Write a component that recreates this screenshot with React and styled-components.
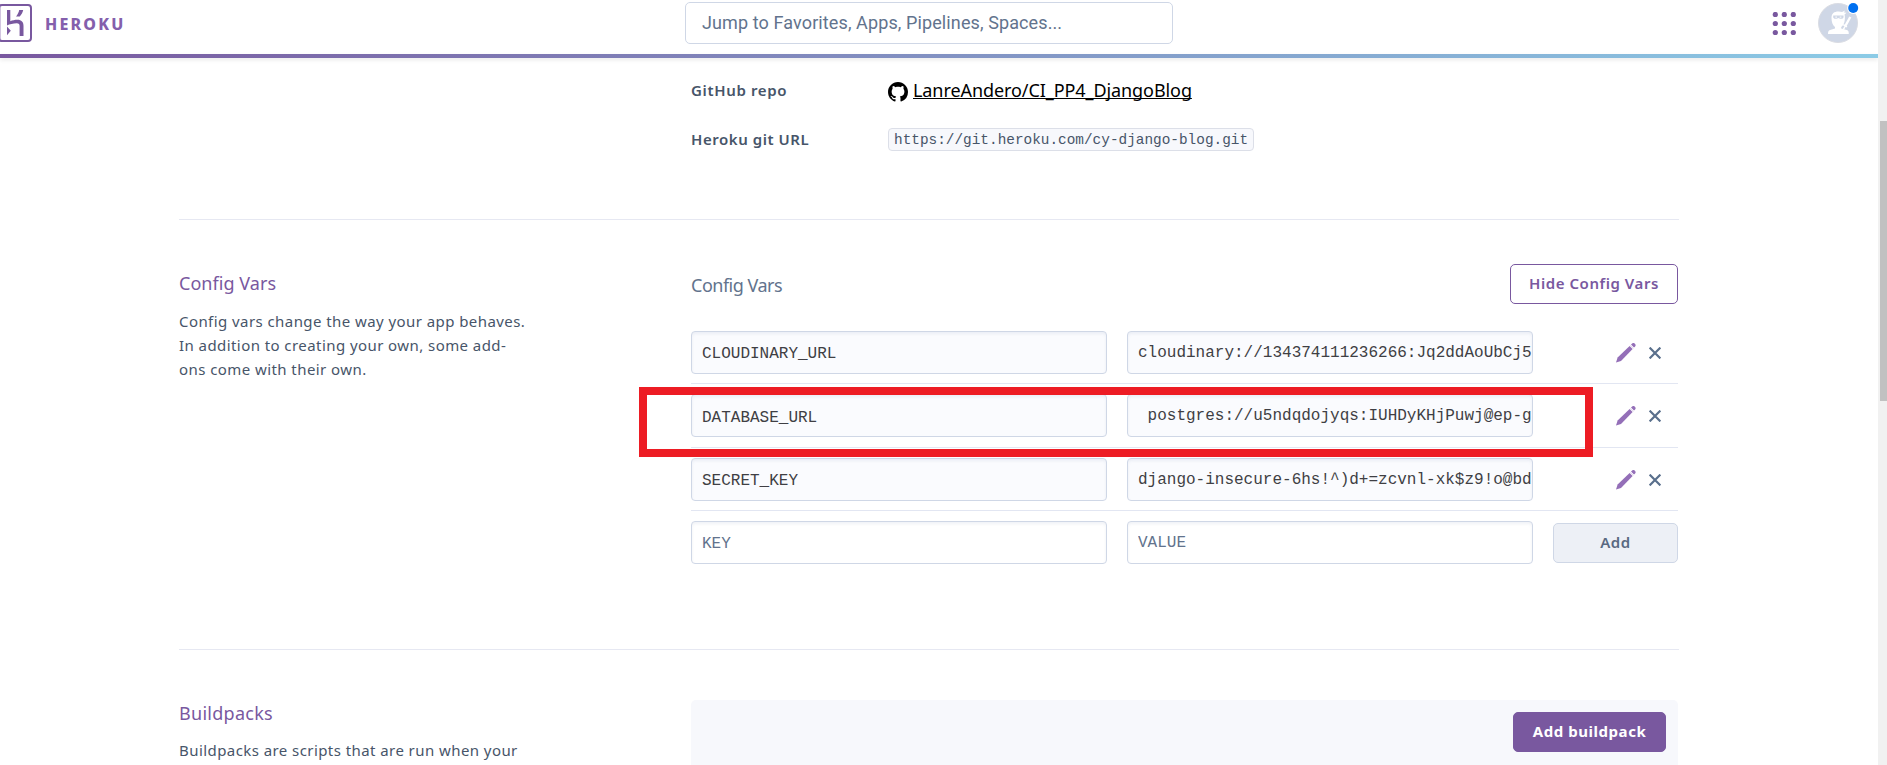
import React from 'react';
import styled, { createGlobalStyle } from 'styled-components';

const Global = createGlobalStyle`
  *, *::before, *::after { box-sizing: border-box; }
  body { margin: 0; background: #fff; overflow: hidden; color: #475569; font-family: "Noto Sans", "Open Sans", sans-serif; }
  h2, h3, p { margin: 0; font-weight: 400; }
  button, input { font-family: inherit; }
`;

const Page = styled.div`
  display: flex;
  height: 765px;
  width: 1887px;
  overflow: hidden;
`;
const Viewport = styled.div`
  width: 1878px;
  flex: none;
  overflow: hidden;
`;
const Scrollbar = styled.div`
  flex: 1;
  background: #f1f1f1;
  padding: 121px 0 0 2px;
`;
const Thumb = styled.div`
  height: 280px;
  background: #c1c1c1;
`;
const Header = styled.header`
  height: 54px;
  display: flex;
  justify-content: space-between;
`;
const GradientBar = styled.div`
  height: 4px;
  background: linear-gradient(90deg, #79589f, #8bcbe6);
  box-shadow: 0 2px 4px rgba(0, 0, 0, 0.09);
`;
const Brand = styled.div`
  display: flex;
  width: 685px;
  padding-top: 4px;
`;
const BrandName = styled.span`
  margin: 8px 0 0 13px;
  font-size: 16px;
  line-height: 24px;
  font-weight: 800;
  letter-spacing: 2.2px;
  color: #845fac;
`;
const Search = styled.input`
  width: 488px;
  height: 42px;
  margin-top: 2px;
  padding: 0 16px 2px;
  border: 1px solid #cfd7e6;
  border-radius: 5px;
  font-family: Roboto, sans-serif;
  font-size: 18px;
  letter-spacing: 0.11px;
  &::placeholder { color: #62738d; opacity: 1; }
`;
const Account = styled.div`
  display: flex;
  justify-content: flex-end;
  gap: 22px;
  width: 705px;
  padding: 3px 19px 0 0;
`;
const Dots = styled.svg`
  margin-top: 9px;
`;
const Content = styled.main`
  width: 1500px;
  margin-left: 179px;
`;
const InfoSection = styled.section`
  height: 162px;
  padding: 19px 0 0 512px;
  border-bottom: 1px solid #e6e8f2;
`;
const InfoRow = styled.div`
  display: flex;
  align-items: center;
  height: 26px;
  margin-bottom: 23px;
`;
const InfoLabel = styled.span`
  width: 197px;
  font-size: 15px;
  font-weight: 600;
  letter-spacing: ${(p) => p.$ls};
`;
const RepoIcon = styled.svg`
  margin-top: 3px;
`;
const RepoLink = styled.a`
  margin-left: 5px;
  font-size: 18px;
  line-height: 26px;
  letter-spacing: -0.08px;
  color: #000;
  text-decoration: underline;
  text-decoration-thickness: 1px;
  text-decoration-skip-ink: none;
  text-underline-offset: 1px;
`;
const Code = styled.code`
  height: 23px;
  margin-top: 1px;
  padding: 1px 5px 0;
  border: 1px solid #dcdfe8;
  border-radius: 4px;
  background: #f7f8fc;
  font: 14.4px/21px "Liberation Mono", monospace;
`;
const Section = styled.section`
  display: flex;
  height: ${(p) => p.$height};
  border-bottom: 1px solid #e6e8f2;
`;
const Aside = styled.div`
  width: 512px;
  padding-top: 50px;
`;
const Title = styled.h2`
  font-size: 18px;
  line-height: 26px;
  letter-spacing: ${(p) => p.$ls};
  color: #79589f;
`;
const Description = styled.p`
  margin-top: ${(p) => p.$gap};
  font-size: 15px;
  line-height: 24px;
  letter-spacing: 0.43px;
  white-space: pre;
`;
const Panel = styled.div`
  width: 987px;
  padding-top: 44px;
`;
const PanelHead = styled.div`
  display: flex;
  justify-content: space-between;
  height: 57px;
`;
const PanelTitle = styled.h3`
  padding-top: 8px;
  font-size: 18px;
  line-height: 26px;
  letter-spacing: -0.5px;
  color: #62738d;
`;
const tones = {
  outline: 'background:#fff;color:#79589f;border-color:#79589f;',
  solid: 'background:#79589f;color:#fff;border-color:#79589f;',
  muted: 'background:#edf0f6;color:#596981;border-color:#cfd7e6;',
};
const Button = styled.button`
  width: ${(p) => p.$width};
  height: 40px;
  padding: 0 0 2px;
  border: 1px solid;
  border-radius: 5px;
  font-size: 15px;
  font-weight: ${(p) => (p.$tone === 'solid' ? 700 : 600)};
  letter-spacing: 0.55px;
  white-space: nowrap;
  ${(p) => tones[p.$tone]}
`;
const VarRow = styled.div`
  display: flex;
  height: ${(p) => p.$height || '63px'};
  padding-top: 10px;
  align-items: flex-start;
  border-bottom: ${(p) => (p.$last ? '0' : '1px solid #e2e6f2')};
`;
const VarInput = styled.input`
  width: ${(p) => p.$width};
  height: 42.5px;
  margin-right: 20px;
  padding: ${(p) => p.$drop || '2px'} 0 0 10px;
  border: 1px solid #cfd7e6;
  border-radius: 4px;
  background: ${(p) => (p.readOnly ? '#fafbfe' : '#fff')};
  box-shadow: inset 0 2px 3px rgba(90, 110, 160, 0.09);
  font-family: "Liberation Mono", monospace;
  font-size: 16px;
  color: #3f3f44;
  &::placeholder { color: #62738d; opacity: 1; }
`;
const Actions = styled.div`
  flex: 1;
  display: flex;
  align-items: center;
  justify-content: flex-end;
  gap: 13px;
  height: 44px;
  padding-right: 17px;
`;
const AddCell = styled.div`
  padding-top: 2px;
`;
const Highlight = styled.div`
  position: absolute;
  left: 639px;
  top: 387px;
  width: 954px;
  height: 70px;
  border: 8px solid #ed1c24;
`;
const BuildpackPanel = styled.div`
  display: flex;
  justify-content: flex-end;
  width: 987px;
  height: 120px;
  margin-top: 50px;
  padding: 12px 12px 0 0;
  border-radius: 5px;
  background: #f7f8fc;
`;

const HerokuLogo = () => (
  <svg width="32" height="38" viewBox="0 0 32 38" fill="#79589f">
    <rect x="-1" y="1" width="32" height="36" rx="3" fill="#fff" stroke="#79589f" strokeWidth="2" />
    <path d="M0 2v34" stroke="#a58bc2" strokeWidth="1" />
    <path d="M7 6h3.300v11.200c2-.8 4.700-1.400 7-1.400 4.300 0 6.200 2.500 6.200 6V32h-3.900V22c0-1.600-.8-2.700-2.800-2.700-3.700 0-7.100 1-9.800 2.200zM7 22.500l3.800 4.300L7 31.300zM19.200 6h4c-.5 2.500-1.700 4.500-3.500 6.400H16c1.700-2 2.800-4 3.200-6.400z" />
  </svg>
);

const AppGrid = () => (
  <Dots width="24" height="24" viewBox="0 0 24 24" fill="#79589f">
    {[3, 12, 21].map((y) => [3, 12, 21].map((x) => <circle key={`${x}-${y}`} cx={x + 0.3} cy={y - 0.5} r="2.6" />))}
  </Dots>
);

const Avatar = () => (
  <svg width="41" height="41" viewBox="0 0 41 41">
    <circle cx="20" cy="20" r="19.500" fill="#cfd7e6" stroke="#dadce3" />
    <path d="M13.500 15c0-4.500 2.500-6.500 7-6.500 1.500 0 2.500.2 3.500.5l3-1.500-1 2 2.500.3-2 1.700c.5 1.500.5 3 .3 5-.3 3.500-1.600 6-3.600 7.500v1.600l5.600 1.400c1.700.5 2 1.500 2 4H10c0-2.500.5-3.500 2-4l5-1.400V24c-2.200-1.700-3.500-4.500-3.500-9z" fill="#fff" />
    <path d="M15.200 12.600h10.300v1.400c0 1.200-.8 1.800-2.200 1.800-1.600 0-2.300-.5-2.900-.9-.6.400-1.400.9-2.900.9-1.500 0-2.300-.6-2.300-1.800z" fill="#cfd7e6" />
    <path d="M17.300 14.100h1.700m2.700 0h1.700" stroke="#fff" strokeWidth="1" />
    <path d="M32.300 14l-5 9" stroke="#fff" strokeWidth="2.400" />
    <path d="M25.200 21.700l3.800 2.200M27 23.500l-1.700 3.200" stroke="#fff" strokeWidth="1.500" />
    <circle cx="35.200" cy="5" r="6" fill="#fff" />
    <circle cx="35.200" cy="5" r="5" fill="#0070f0" />
  </svg>
);

const GitHubMark = () => (
  <RepoIcon width="20" height="20" viewBox="0 0 16 16" fill="#000">
    <path d="M8 0C3.580 0 0 3.580 0 8c0 3.540 2.290 6.530 5.470 7.590.4.070.55-.17.55-.38 0-.19-.01-.82-.01-1.490-2.010.37-2.530-.49-2.690-.94-.09-.23-.48-.94-.82-1.130-.28-.15-.68-.52-.01-.53.63-.01 1.080.58 1.230.82.72 1.210 1.870.87 2.330.66.07-.52.28-.87.51-1.070-1.780-.2-3.640-.89-3.640-3.950 0-.87.31-1.590.82-2.150-.08-.2-.36-1.020.08-2.120 0 0 .67-.21 2.200.82.64-.18 1.320-.27 2-.27s1.360.09 2 .27c1.530-1.040 2.200-.82 2.200-.82.44 1.100.16 1.920.08 2.120.51.56.82 1.270.82 2.150 0 3.070-1.870 3.750-3.650 3.950.29.25.54.73.54 1.480 0 1.070-.01 1.930-.01 2.200 0 .21.15.46.55.38A8.010 8.010 0 0 0 16 8c0-4.420-3.580-8-8-8z" />
  </RepoIcon>
);

const Pencil = () => (
  <svg width="20" height="20" viewBox="0 0 20 20" fill="#946fb8">
    <path d="M0 19.500l1.600-5L13.600 3l3 3L5 17.900z" />
    <path d="M15 1.600l.9-.9a2.100 2.100 0 0 1 3 3l-.9.9z" />
    <path d="M14.100 2.200l3.300 3.300" stroke="#dccfe9" strokeWidth="0.9" />
  </svg>
);

const Cross = () => (
  <svg width="12" height="12" viewBox="0 0 12 12" stroke="#596f8c" strokeWidth="2.200">
    <path d="M.6.6l10.800 10.800M11.400.6L.6 11.400" />
  </svg>
);

const vars = [
  { key: 'CLOUDINARY_URL', value: 'cloudinary://134374111236266:Jq2ddAoUbCj5' },
  { key: 'DATABASE_URL', value: ' postgres://u5ndqdojyqs:IUHDyKHjPuwj@ep-g', height: '64px', drop: '5px' },
  { key: 'SECRET_KEY', value: 'django-insecure-6hs!^)d+=zcvnl-xk$z9!o@bd' },
];

export default function App() {
  return (
    <Page>
      <Global />
      <Viewport>
        <Header>
          <Brand>
            <HerokuLogo />
            <BrandName>HEROKU</BrandName>
          </Brand>
          <Search placeholder="Jump to Favorites, Apps, Pipelines, Spaces..." />
          <Account>
            <AppGrid />
            <Avatar />
          </Account>
        </Header>
        <GradientBar />
        <Content>
          <InfoSection>
            <InfoRow>
              <InfoLabel $ls="0.65px">GitHub repo</InfoLabel>
              <GitHubMark />
              <RepoLink>LanreAndero/CI_PP4_DjangoBlog</RepoLink>
            </InfoRow>
            <InfoRow>
              <InfoLabel $ls="0.55px">Heroku git URL</InfoLabel>
              <Code>https://git.heroku.com/cy-django-blog.git</Code>
            </InfoRow>
          </InfoSection>
          <Section $height="430px">
            <Aside>
              <Title $ls="0.05px">Config Vars</Title>
              <Description $gap="13px">{'Config vars change the way your app behaves.\nIn addition to creating your own, some add-\nons come with their own.'}</Description>
            </Aside>
            <Panel>
              <PanelHead>
                <PanelTitle>Config Vars</PanelTitle>
                <Button $tone="outline" $width="168px">Hide Config Vars</Button>
              </PanelHead>
              {vars.map(({ key, value, height, drop }) => (
                <VarRow key={key} $height={height}>
                  <VarInput $width="416px" $drop={drop || '3px'} defaultValue={key} readOnly />
                  <VarInput $width="406px" defaultValue={value} readOnly />
                  <Actions>
                    <Pencil />
                    <Cross />
                  </Actions>
                </VarRow>
              ))}
              <VarRow $last>
                <VarInput $width="416px" $drop="4px" placeholder="KEY" />
                <VarInput $width="406px" placeholder="VALUE" />
                <AddCell>
                  <Button $tone="muted" $width="125px">Add</Button>
                </AddCell>
              </VarRow>
            </Panel>
          </Section>
          <Section $height="200px">
            <Aside>
              <Title $ls="0.28px">Buildpacks</Title>
              <Description $gap="12px">Buildpacks are scripts that are run when your</Description>
            </Aside>
            <BuildpackPanel>
              <Button $tone="solid" $width="153px">Add buildpack</Button>
            </BuildpackPanel>
          </Section>
        </Content>
      </Viewport>
      <Scrollbar>
        <Thumb />
      </Scrollbar>
      <Highlight />
    </Page>
  );
}
